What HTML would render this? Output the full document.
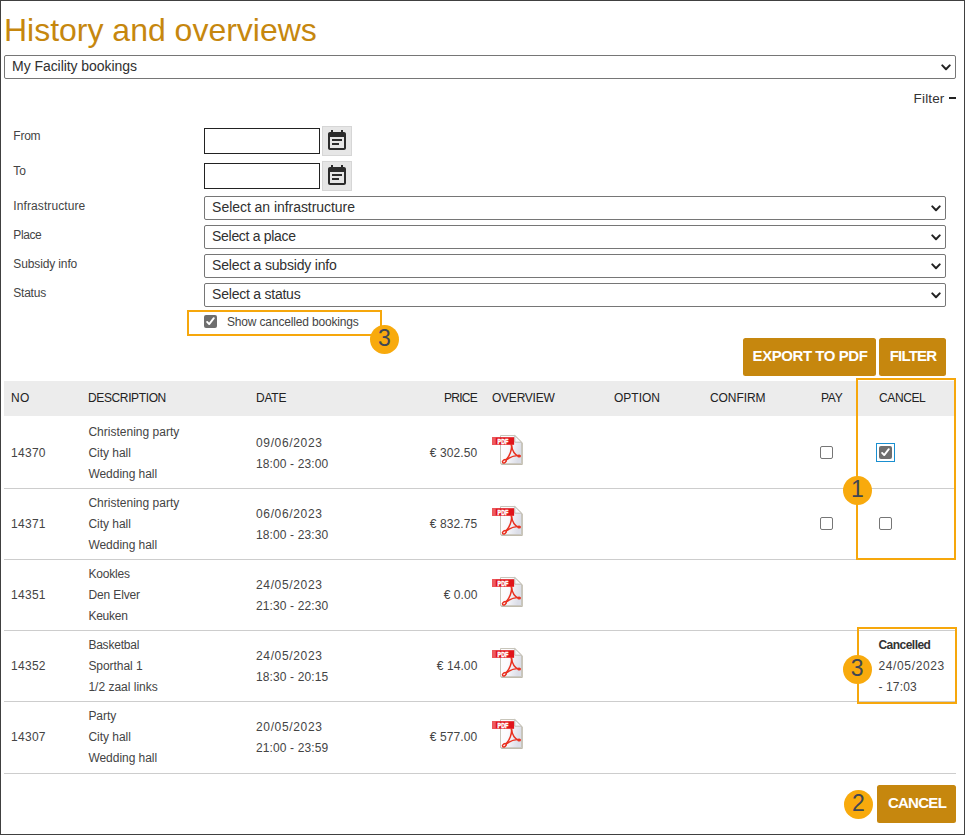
<!DOCTYPE html>
<html lang="en">
<head>
<meta charset="utf-8">
<title>History and overviews</title>
<style>
*{box-sizing:border-box;margin:0;padding:0}
html,body{width:965px;height:835px;overflow:hidden;background:#fff}
body{font-family:"Liberation Sans",sans-serif;color:#333;position:relative;font-size:13px}
.t,.sel,.inp,.btn,.badge,.hl,.cal,.line,.cb,.pdf,.hd{position:absolute}
.frame{position:absolute;left:0;top:0;width:965px;height:835px;border:1px solid #404040;z-index:50;pointer-events:none}
.t{white-space:nowrap;line-height:16px;font-size:12px;color:#444}
h1.t{font-size:32px;line-height:40px;font-weight:400;color:#c6870e}
.sel{border:1px solid #767676;border-radius:2px;background:#fff;height:24px}
.sel svg{position:absolute;right:4.5px;top:8px}
.inp{border:1px solid #222;background:#fff;height:26px;width:116px}
.cal{width:30px;height:30px;background:#e6e6e6;border:1px solid #d6d6d6}
.cal svg{position:absolute;left:2px;top:2px}
.btn{background:#c6870e;border-radius:2.5px;height:38px}
.btn .t{color:#fff;font-weight:700;font-size:15px}
.badge{width:29px;height:29px;border-radius:50%;background:#f8aa0d;z-index:10}
.badge .t{font-family:"Liberation Sans",sans-serif;color:#3e4654;font-size:23px;line-height:29px;top:-1px;left:0;width:29px;text-align:center}
.hl{border:2px solid #f6a70c;z-index:5}
.hd{left:4px;top:381px;width:952px;height:35px;background:#ececec}
.line{left:4px;width:952px;height:1px;background:#cdcdcd}
.cb{width:13px;height:13px;border:1px solid #767676;border-radius:2px;background:#fff}
</style>
</head>
<body>
<div class="frame"></div>
<h1 class="t" id="title" style="left:4px;top:10px;letter-spacing:-0.010px;">History and overviews</h1>
<div class="sel" style="left:4px;top:55px;width:952px;height:24px"><div class="t" id="t2" style="left:7.1px;top:2px;letter-spacing:-0.066px;font-size:14px;line-height:17px;color:#303030;">My Facility bookings</div><svg width="10" height="7" viewBox="0 0 10 7"><path d="M1.3 1.4 L5 5.2 L8.7 1.4" fill="none" stroke="#222" stroke-width="2" stroke-linecap="round" stroke-linejoin="round"/></svg></div>
<div class="t" id="filter" style="right:20.5px;top:91px;letter-spacing:0.148px;font-size:13.5px;color:#333;">Filter</div>
<div class="line" style="left:949px;top:96.5px;width:7px;height:2.5px;background:#222"></div>
<div class="t" id="lab0" style="left:13.3px;top:128px;letter-spacing:-0.230px;">From</div>
<div class="t" id="lab1" style="left:13.3px;top:163px;letter-spacing:-0.125px;">To</div>
<div class="t" id="lab2" style="left:13.3px;top:198px;letter-spacing:0.097px;">Infrastructure</div>
<div class="t" id="lab3" style="left:13.3px;top:227px;letter-spacing:-0.419px;">Place</div>
<div class="t" id="lab4" style="left:13.3px;top:256px;letter-spacing:-0.126px;">Subsidy info</div>
<div class="t" id="lab5" style="left:13.3px;top:285px;letter-spacing:-0.234px;">Status</div>
<div class="inp" style="left:204px;top:128px"></div>
<div class="cal" style="left:322px;top:126px"><svg width="24" height="24" viewBox="0 0 24 24"><path fill="#2b2b2b" d="M17 10H7v2h10v-2zm2-7h-1V1h-2v2H8V1H6v2H5c-1.11 0-1.99.9-1.99 2L3 19c0 1.1.89 2 2 2h14c1.1 0 2-.9 2-2V5c0-1.1-.9-2-2-2zm0 16H5V8h14v11zm-5-5H7v2h7v-2z"/></svg></div>
<div class="inp" style="left:204px;top:163px"></div>
<div class="cal" style="left:322px;top:161px"><svg width="24" height="24" viewBox="0 0 24 24"><path fill="#2b2b2b" d="M17 10H7v2h10v-2zm2-7h-1V1h-2v2H8V1H6v2H5c-1.11 0-1.99.9-1.99 2L3 19c0 1.1.89 2 2 2h14c1.1 0 2-.9 2-2V5c0-1.1-.9-2-2-2zm0 16H5V8h14v11zm-5-5H7v2h7v-2z"/></svg></div>
<div class="sel" style="left:204px;top:196px;width:742px;height:24px"><div class="t" id="t10" style="left:7.1px;top:2px;letter-spacing:-0.045px;font-size:14px;line-height:17px;color:#303030;">Select an infrastructure</div><svg width="10" height="7" viewBox="0 0 10 7"><path d="M1.3 1.4 L5 5.2 L8.7 1.4" fill="none" stroke="#222" stroke-width="2" stroke-linecap="round" stroke-linejoin="round"/></svg></div>
<div class="sel" style="left:204px;top:225px;width:742px;height:24px"><div class="t" id="t11" style="left:7.1px;top:2px;letter-spacing:-0.316px;font-size:14px;line-height:17px;color:#303030;">Select a place</div><svg width="10" height="7" viewBox="0 0 10 7"><path d="M1.3 1.4 L5 5.2 L8.7 1.4" fill="none" stroke="#222" stroke-width="2" stroke-linecap="round" stroke-linejoin="round"/></svg></div>
<div class="sel" style="left:204px;top:254px;width:742px;height:24px"><div class="t" id="t12" style="left:7.1px;top:2px;letter-spacing:-0.182px;font-size:14px;line-height:17px;color:#303030;">Select a subsidy info</div><svg width="10" height="7" viewBox="0 0 10 7"><path d="M1.3 1.4 L5 5.2 L8.7 1.4" fill="none" stroke="#222" stroke-width="2" stroke-linecap="round" stroke-linejoin="round"/></svg></div>
<div class="sel" style="left:204px;top:283px;width:742px;height:24px"><div class="t" id="t13" style="left:7.1px;top:2px;letter-spacing:-0.234px;font-size:14px;line-height:17px;color:#303030;">Select a status</div><svg width="10" height="7" viewBox="0 0 10 7"><path d="M1.3 1.4 L5 5.2 L8.7 1.4" fill="none" stroke="#222" stroke-width="2" stroke-linecap="round" stroke-linejoin="round"/></svg></div>
<div class="hl" style="left:187px;top:310px;width:194.5px;height:26px"></div>
<div class="cb" style="left:204px;top:315px;border:none"><svg width="13" height="13" viewBox="0 0 13 13"><rect x="0" y="0" width="13" height="13" rx="2" fill="#6e6e6e"/><path d="M3.1 6.9 L5.2 9.1 L9.8 3.2" fill="none" stroke="#fff" stroke-width="1.9" stroke-linecap="round" stroke-linejoin="round"/></svg></div>
<div class="t" id="showc" style="left:227px;top:314px;letter-spacing:-0.164px;">Show cancelled bookings</div>
<div class="badge" style="left:370px;top:325px"><div class="t">3</div></div>
<div class="btn" style="left:743px;top:338px;width:133px;height:38px"><div class="t" id="t16" style="left:0.5px;top:-1px;letter-spacing:-0.447px;width:133px;text-align:center;line-height:38px;">EXPORT TO PDF</div></div>
<div class="btn" style="left:879px;top:338px;width:67px;height:38px"><div class="t" id="t17" style="left:0.5px;top:-1px;letter-spacing:-0.786px;width:67px;text-align:center;line-height:38px;">FILTER</div></div>
<div class="hd"></div>
<div class="t th" id="h0" style="left:11px;top:390px;letter-spacing:0.391px;color:#222;">NO</div>
<div class="t th" id="h1" style="left:88px;top:390px;letter-spacing:-0.375px;color:#222;">DESCRIPTION</div>
<div class="t th" id="h2" style="left:256px;top:390px;letter-spacing:-0.234px;color:#222;">DATE</div>
<div class="t th" id="h3" style="right:488px;top:390px;letter-spacing:-0.731px;color:#222;">PRICE</div>
<div class="t th" id="h4" style="left:492px;top:390px;letter-spacing:-0.238px;color:#222;">OVERVIEW</div>
<div class="t th" id="h5" style="left:614px;top:390px;letter-spacing:0.003px;color:#222;">OPTION</div>
<div class="t th" id="h6" style="left:710px;top:390px;letter-spacing:-0.080px;color:#222;">CONFIRM</div>
<div class="t th" id="h7" style="left:821px;top:390px;letter-spacing:-0.281px;color:#222;">PAY</div>
<div class="t th" id="h8" style="left:879px;top:390px;letter-spacing:-0.378px;color:#222;">CANCEL</div>
<div class="t" id="no0" style="left:11px;top:445px;letter-spacing:0.287px;">14370</div>
<div class="t" id="d0_0" style="left:88.4px;top:424px;letter-spacing:0.011px;">Christening party</div>
<div class="t" id="d0_1" style="left:88.4px;top:445px;letter-spacing:-0.021px;">City hall</div>
<div class="t" id="d0_2" style="left:88.4px;top:466px;letter-spacing:-0.035px;">Wedding hall</div>
<div class="t" id="dt0_0" style="left:256px;top:435px;letter-spacing:0.647px;">09/06/2023</div>
<div class="t" id="dt0_1" style="left:256px;top:456px;letter-spacing:0.120px;">18:00 - 23:00</div>
<div class="t" id="p0" style="right:487.6px;top:445px;letter-spacing:0.119px;">€ 302.50</div>
<svg class="pdf" style="left:491px;top:434px" width="34" height="34" viewBox="0 0 34 34"><defs><linearGradient id="pg" x1="0" y1="0" x2="1" y2="0.3"><stop offset="0" stop-color="#ffffff"/><stop offset="0.45" stop-color="#fbfbfd"/><stop offset="1" stop-color="#dcdee8"/></linearGradient></defs><path d="M10.2 30.5 H31.3 V8.6" fill="none" stroke="#b9b4a4" stroke-width="1" opacity="0.9"/><path d="M9.5 1.5 H23.8 L30.6 8.2 V29.7 H9.5 Z" fill="url(#pg)" stroke="#c2beb2" stroke-width="0.9"/><path d="M23.8 1.5 V8.2 H30.6 Z" fill="#f7f7fb" stroke="#bcb8ad" stroke-width="0.9" stroke-linejoin="round"/><rect x="1.1" y="3.2" width="22" height="7.6" fill="#e0141b"/><rect x="1.1" y="3.2" width="3.6" height="7.6" fill="#ee5a5e"/><text x="6.6" y="9.9" font-family="'Liberation Sans',sans-serif" font-size="7" font-weight="700" fill="#fff" stroke="#fff" stroke-width="0.45" textLength="10.8" lengthAdjust="spacingAndGlyphs">PDF</text><g fill="none" stroke="#e9301f" stroke-width="1.45" stroke-linecap="round"><path d="M20.4 10.8 C21.2 15.5 18.6 22 15 26"/><path d="M20.4 10.8 C21 15.5 23.8 20.6 27.6 22.4"/><path d="M15.4 25.8 C18.6 23.4 22.8 21.8 27.4 21.4"/><ellipse cx="13.4" cy="27.2" rx="2.2" ry="1.35" transform="rotate(-36 13.4 27.2)"/></g><ellipse cx="28.2" cy="21.9" rx="1.8" ry="1.5" fill="#e9301f"/></svg>
<div class="line" style="top:488px"></div>
<div class="t" id="no1" style="left:11px;top:516px;letter-spacing:0.287px;">14371</div>
<div class="t" id="d1_0" style="left:88.4px;top:495px;letter-spacing:0.011px;">Christening party</div>
<div class="t" id="d1_1" style="left:88.4px;top:516px;letter-spacing:-0.021px;">City hall</div>
<div class="t" id="d1_2" style="left:88.4px;top:537px;letter-spacing:-0.035px;">Wedding hall</div>
<div class="t" id="dt1_0" style="left:256px;top:506px;letter-spacing:0.647px;">06/06/2023</div>
<div class="t" id="dt1_1" style="left:256px;top:527px;letter-spacing:0.120px;">18:00 - 23:30</div>
<div class="t" id="p1" style="right:487.6px;top:516px;letter-spacing:0.119px;">€ 832.75</div>
<svg class="pdf" style="left:491px;top:505px" width="34" height="34" viewBox="0 0 34 34"><defs><linearGradient id="pg" x1="0" y1="0" x2="1" y2="0.3"><stop offset="0" stop-color="#ffffff"/><stop offset="0.45" stop-color="#fbfbfd"/><stop offset="1" stop-color="#dcdee8"/></linearGradient></defs><path d="M10.2 30.5 H31.3 V8.6" fill="none" stroke="#b9b4a4" stroke-width="1" opacity="0.9"/><path d="M9.5 1.5 H23.8 L30.6 8.2 V29.7 H9.5 Z" fill="url(#pg)" stroke="#c2beb2" stroke-width="0.9"/><path d="M23.8 1.5 V8.2 H30.6 Z" fill="#f7f7fb" stroke="#bcb8ad" stroke-width="0.9" stroke-linejoin="round"/><rect x="1.1" y="3.2" width="22" height="7.6" fill="#e0141b"/><rect x="1.1" y="3.2" width="3.6" height="7.6" fill="#ee5a5e"/><text x="6.6" y="9.9" font-family="'Liberation Sans',sans-serif" font-size="7" font-weight="700" fill="#fff" stroke="#fff" stroke-width="0.45" textLength="10.8" lengthAdjust="spacingAndGlyphs">PDF</text><g fill="none" stroke="#e9301f" stroke-width="1.45" stroke-linecap="round"><path d="M20.4 10.8 C21.2 15.5 18.6 22 15 26"/><path d="M20.4 10.8 C21 15.5 23.8 20.6 27.6 22.4"/><path d="M15.4 25.8 C18.6 23.4 22.8 21.8 27.4 21.4"/><ellipse cx="13.4" cy="27.2" rx="2.2" ry="1.35" transform="rotate(-36 13.4 27.2)"/></g><ellipse cx="28.2" cy="21.9" rx="1.8" ry="1.5" fill="#e9301f"/></svg>
<div class="line" style="top:559px"></div>
<div class="t" id="no2" style="left:11px;top:587px;letter-spacing:0.287px;">14351</div>
<div class="t" id="d2_0" style="left:88.4px;top:566px;letter-spacing:-0.163px;">Kookles</div>
<div class="t" id="d2_1" style="left:88.4px;top:587px;letter-spacing:-0.122px;">Den Elver</div>
<div class="t" id="d2_2" style="left:88.4px;top:608px;letter-spacing:-0.232px;">Keuken</div>
<div class="t" id="dt2_0" style="left:256px;top:577px;letter-spacing:0.647px;">24/05/2023</div>
<div class="t" id="dt2_1" style="left:256px;top:598px;letter-spacing:0.120px;">21:30 - 22:30</div>
<div class="t" id="p2" style="right:487.6px;top:587px;letter-spacing:0.062px;">€ 0.00</div>
<svg class="pdf" style="left:491px;top:576px" width="34" height="34" viewBox="0 0 34 34"><defs><linearGradient id="pg" x1="0" y1="0" x2="1" y2="0.3"><stop offset="0" stop-color="#ffffff"/><stop offset="0.45" stop-color="#fbfbfd"/><stop offset="1" stop-color="#dcdee8"/></linearGradient></defs><path d="M10.2 30.5 H31.3 V8.6" fill="none" stroke="#b9b4a4" stroke-width="1" opacity="0.9"/><path d="M9.5 1.5 H23.8 L30.6 8.2 V29.7 H9.5 Z" fill="url(#pg)" stroke="#c2beb2" stroke-width="0.9"/><path d="M23.8 1.5 V8.2 H30.6 Z" fill="#f7f7fb" stroke="#bcb8ad" stroke-width="0.9" stroke-linejoin="round"/><rect x="1.1" y="3.2" width="22" height="7.6" fill="#e0141b"/><rect x="1.1" y="3.2" width="3.6" height="7.6" fill="#ee5a5e"/><text x="6.6" y="9.9" font-family="'Liberation Sans',sans-serif" font-size="7" font-weight="700" fill="#fff" stroke="#fff" stroke-width="0.45" textLength="10.8" lengthAdjust="spacingAndGlyphs">PDF</text><g fill="none" stroke="#e9301f" stroke-width="1.45" stroke-linecap="round"><path d="M20.4 10.8 C21.2 15.5 18.6 22 15 26"/><path d="M20.4 10.8 C21 15.5 23.8 20.6 27.6 22.4"/><path d="M15.4 25.8 C18.6 23.4 22.8 21.8 27.4 21.4"/><ellipse cx="13.4" cy="27.2" rx="2.2" ry="1.35" transform="rotate(-36 13.4 27.2)"/></g><ellipse cx="28.2" cy="21.9" rx="1.8" ry="1.5" fill="#e9301f"/></svg>
<div class="line" style="top:630px"></div>
<div class="t" id="no3" style="left:11px;top:658px;letter-spacing:0.287px;">14352</div>
<div class="t" id="d3_0" style="left:88.4px;top:637px;letter-spacing:-0.222px;">Basketbal</div>
<div class="t" id="d3_1" style="left:88.4px;top:658px;letter-spacing:-0.059px;">Sporthal 1</div>
<div class="t" id="d3_2" style="left:88.4px;top:679px;">1/2 zaal links</div>
<div class="t" id="dt3_0" style="left:256px;top:648px;letter-spacing:0.647px;">24/05/2023</div>
<div class="t" id="dt3_1" style="left:256px;top:669px;letter-spacing:0.120px;">18:30 - 20:15</div>
<div class="t" id="p3" style="right:487.6px;top:658px;letter-spacing:0.096px;">€ 14.00</div>
<svg class="pdf" style="left:491px;top:647px" width="34" height="34" viewBox="0 0 34 34"><defs><linearGradient id="pg" x1="0" y1="0" x2="1" y2="0.3"><stop offset="0" stop-color="#ffffff"/><stop offset="0.45" stop-color="#fbfbfd"/><stop offset="1" stop-color="#dcdee8"/></linearGradient></defs><path d="M10.2 30.5 H31.3 V8.6" fill="none" stroke="#b9b4a4" stroke-width="1" opacity="0.9"/><path d="M9.5 1.5 H23.8 L30.6 8.2 V29.7 H9.5 Z" fill="url(#pg)" stroke="#c2beb2" stroke-width="0.9"/><path d="M23.8 1.5 V8.2 H30.6 Z" fill="#f7f7fb" stroke="#bcb8ad" stroke-width="0.9" stroke-linejoin="round"/><rect x="1.1" y="3.2" width="22" height="7.6" fill="#e0141b"/><rect x="1.1" y="3.2" width="3.6" height="7.6" fill="#ee5a5e"/><text x="6.6" y="9.9" font-family="'Liberation Sans',sans-serif" font-size="7" font-weight="700" fill="#fff" stroke="#fff" stroke-width="0.45" textLength="10.8" lengthAdjust="spacingAndGlyphs">PDF</text><g fill="none" stroke="#e9301f" stroke-width="1.45" stroke-linecap="round"><path d="M20.4 10.8 C21.2 15.5 18.6 22 15 26"/><path d="M20.4 10.8 C21 15.5 23.8 20.6 27.6 22.4"/><path d="M15.4 25.8 C18.6 23.4 22.8 21.8 27.4 21.4"/><ellipse cx="13.4" cy="27.2" rx="2.2" ry="1.35" transform="rotate(-36 13.4 27.2)"/></g><ellipse cx="28.2" cy="21.9" rx="1.8" ry="1.5" fill="#e9301f"/></svg>
<div class="line" style="top:701px"></div>
<div class="t" id="no4" style="left:11px;top:729px;letter-spacing:0.287px;">14307</div>
<div class="t" id="d4_0" style="left:88.4px;top:708px;letter-spacing:-0.034px;">Party</div>
<div class="t" id="d4_1" style="left:88.4px;top:729px;letter-spacing:-0.021px;">City hall</div>
<div class="t" id="d4_2" style="left:88.4px;top:750px;letter-spacing:-0.035px;">Wedding hall</div>
<div class="t" id="dt4_0" style="left:256px;top:719px;letter-spacing:0.647px;">20/05/2023</div>
<div class="t" id="dt4_1" style="left:256px;top:740px;letter-spacing:0.120px;">21:00 - 23:59</div>
<div class="t" id="p4" style="right:487.6px;top:729px;letter-spacing:0.119px;">€ 577.00</div>
<svg class="pdf" style="left:491px;top:718px" width="34" height="34" viewBox="0 0 34 34"><defs><linearGradient id="pg" x1="0" y1="0" x2="1" y2="0.3"><stop offset="0" stop-color="#ffffff"/><stop offset="0.45" stop-color="#fbfbfd"/><stop offset="1" stop-color="#dcdee8"/></linearGradient></defs><path d="M10.2 30.5 H31.3 V8.6" fill="none" stroke="#b9b4a4" stroke-width="1" opacity="0.9"/><path d="M9.5 1.5 H23.8 L30.6 8.2 V29.7 H9.5 Z" fill="url(#pg)" stroke="#c2beb2" stroke-width="0.9"/><path d="M23.8 1.5 V8.2 H30.6 Z" fill="#f7f7fb" stroke="#bcb8ad" stroke-width="0.9" stroke-linejoin="round"/><rect x="1.1" y="3.2" width="22" height="7.6" fill="#e0141b"/><rect x="1.1" y="3.2" width="3.6" height="7.6" fill="#ee5a5e"/><text x="6.6" y="9.9" font-family="'Liberation Sans',sans-serif" font-size="7" font-weight="700" fill="#fff" stroke="#fff" stroke-width="0.45" textLength="10.8" lengthAdjust="spacingAndGlyphs">PDF</text><g fill="none" stroke="#e9301f" stroke-width="1.45" stroke-linecap="round"><path d="M20.4 10.8 C21.2 15.5 18.6 22 15 26"/><path d="M20.4 10.8 C21 15.5 23.8 20.6 27.6 22.4"/><path d="M15.4 25.8 C18.6 23.4 22.8 21.8 27.4 21.4"/><ellipse cx="13.4" cy="27.2" rx="2.2" ry="1.35" transform="rotate(-36 13.4 27.2)"/></g><ellipse cx="28.2" cy="21.9" rx="1.8" ry="1.5" fill="#e9301f"/></svg>
<div class="line" style="top:773px"></div>
<div class="cb" style="left:820px;top:446px"></div>
<div class="cb" style="left:820px;top:517px"></div>
<div class="cb" style="left:879px;top:517px"></div>
<div class="cb" style="left:876px;top:443px;border:none;width:19px;height:19px;background:none"><svg width="19" height="19" viewBox="0 0 19 19"><rect x="0.5" y="0.5" width="18" height="18" fill="#fff" stroke="#1a8fd0" stroke-width="1"/><rect x="3" y="3" width="13" height="13" rx="2" fill="#6e6e6e"/><path d="M6.1 9.9 L8.2 12.1 L12.8 6.2" fill="none" stroke="#fff" stroke-width="1.9" stroke-linecap="round" stroke-linejoin="round"/></svg></div>
<div class="hl" style="left:856px;top:378px;width:100px;height:182px"></div>
<div class="badge" style="left:843px;top:476px"><div class="t">1</div></div>
<div class="hl" style="left:857px;top:627px;width:100px;height:77px"></div>
<div class="t" id="canc" style="left:878.4px;top:637px;letter-spacing:-0.516px;font-weight:700;font-size:12px;color:#333;z-index:6;">Cancelled</div>
<div class="t" id="cdate" style="left:878.4px;top:658px;letter-spacing:0.647px;z-index:6;">24/05/2023</div>
<div class="t" id="ctime" style="left:878.4px;top:679px;letter-spacing:0.145px;z-index:6;">- 17:03</div>
<div class="badge" style="left:842.7px;top:655px"><div class="t">3</div></div>
<div class="badge" style="left:844px;top:790px"><div class="t">2</div></div>
<div class="btn" style="left:877px;top:785px;width:79px;height:38px"><div class="t" id="t68" style="left:0.5px;top:-1px;letter-spacing:-0.708px;width:79px;text-align:center;line-height:38px;">CANCEL</div></div>
</body>
</html>
